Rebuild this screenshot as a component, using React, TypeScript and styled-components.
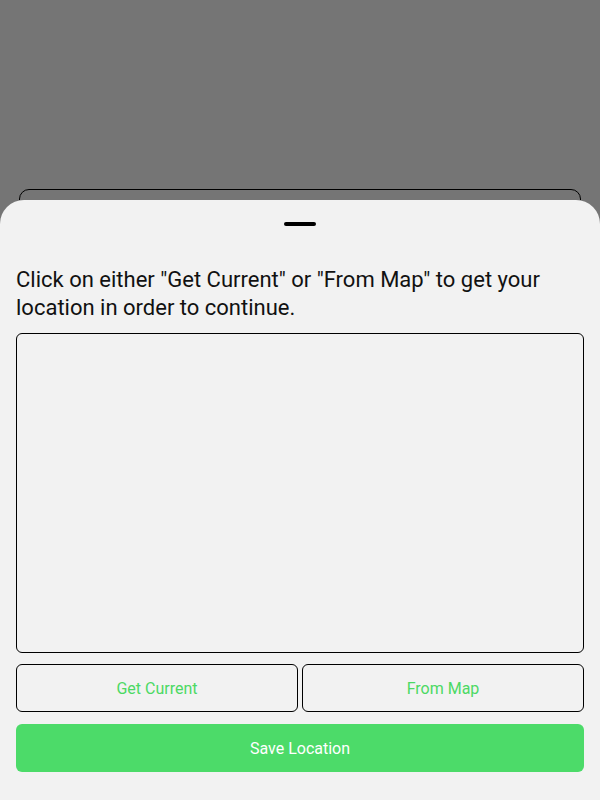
import React from "react";
import styled, { createGlobalStyle } from "styled-components";

const Global = createGlobalStyle`
  html, body { margin: 0; padding: 0; }
  body { font-family: Roboto, "Liberation Sans", sans-serif; background: #757575; }
  * { box-sizing: border-box; }
`;

const Page = styled.div`
  width: 600px;
  height: 800px;
  display: flex;
  flex-direction: column;
  background: #757575;
  overflow: hidden;
`;

const Backdrop = styled.div`
  height: 200px;
  padding: 189px 19px 0;
  overflow: hidden;
  flex: none;
`;

const HiddenCard = styled.div`
  height: 40px;
  border: 1px solid #000;
  border-radius: 10px;
`;

const Sheet = styled.div`
  flex: 1;
  background: #f2f2f2;
  border-radius: 24px 24px 0 0;
  padding: 22px 16px 0;
  display: flex;
  flex-direction: column;
`;

const Handle = styled.div`
  width: 32px;
  height: 4px;
  border-radius: 2px;
  background: #000;
  align-self: center;
`;

const Message = styled.p`
  margin: 40px 0 0;
  font-size: 22px;
  line-height: 28px;
  color: #111;
`;

const AddressBox = styled.div`
  margin-top: 11px;
  height: 320px;
  border: 1px solid #000;
  border-radius: 6px;
`;

const ButtonRow = styled.div`
  margin-top: 11px;
  display: grid;
  grid-template-columns: 1fr 1fr;
  gap: 4px;
`;

const OutlineButton = styled.button`
  height: 48px;
  border: 1px solid #000;
  border-radius: 6px;
  background: transparent;
  color: #4cd964;
  font-family: Roboto, "Liberation Sans", sans-serif;
  font-size: 16px;
  padding: 0;
`;

const SaveButton = styled.button`
  margin-top: 12px;
  height: 48px;
  border: none;
  border-radius: 6px;
  background: #4cdb69;
  color: #fff;
  font-family: Roboto, "Liberation Sans", sans-serif;
  font-size: 16px;
`;

export default function App() {
  return (
    <>
      <Global />
      <Page>
        <Backdrop>
          <HiddenCard />
        </Backdrop>
        <Sheet>
          <Handle />
          <Message>
            Click on either "Get Current" or "From Map" to get your location in order to continue.
          </Message>
          <AddressBox />
          <ButtonRow>
            <OutlineButton>Get Current</OutlineButton>
            <OutlineButton>From Map</OutlineButton>
          </ButtonRow>
          <SaveButton>Save Location</SaveButton>
        </Sheet>
      </Page>
    </>
  );
}
